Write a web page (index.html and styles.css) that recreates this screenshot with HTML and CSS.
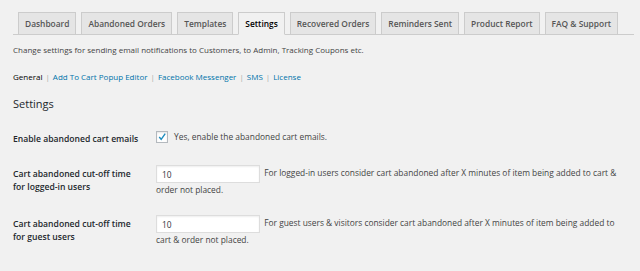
FILE: index.html
```html
<!DOCTYPE html>
<html lang="en">
<head>
    <meta charset="UTF-8">
    <meta name="viewport" content="width=device-width, initial-scale=1.0">
    <link rel="stylesheet" href="styles.css">
    <title>Abandoned Cart Settings</title>
</head>
<body>
    <div class="wrap">
        <!-- Pestañas principales -->
        <nav class="nav-tabs">
            <a class="nav-tab" href="#">Dashboard</a>
            <a class="nav-tab" href="#">Abandoned Orders</a>
            <a class="nav-tab" href="#">Templates</a>
            <a class="nav-tab active" href="#">Settings</a>
            <a class="nav-tab" href="#">Recovered Orders</a>
            <a class="nav-tab" href="#">Reminders Sent</a>
            <a class="nav-tab" href="#">Product Report</a>
            <a class="nav-tab" href="#">FAQ &amp; Support</a>
        </nav>

        <p class="intro">Change settings for sending email notifications to Customers, to Admin, Tracking Coupons etc.</p>

        <ul class="subsubsub">
            <li><a class="current" href="#">General</a><span class="sep">|</span></li>
            <li><a href="#">Add To Cart Popup Editor</a><span class="sep">|</span></li>
            <li><a href="#">Facebook Messenger</a><span class="sep">|</span></li>
            <li><a href="#">SMS</a><span class="sep">|</span></li>
            <li><a href="#">License</a></li>
        </ul>

        <h2>Settings</h2>

        <div class="form-table">
            <div class="row">
                <label class="th" for="enable-emails">Enable abandoned cart emails</label>
                <div class="td">
                    <label class="check">
                        <input type="checkbox" id="enable-emails" checked>
                        <span class="box">
                            <svg viewBox="0 0 10 10" width="10" height="10"><path d="M2.2 5 L4.2 7.3 L8.2 1.6" fill="none" stroke="#1e8cbe" stroke-width="1.4"/></svg>
                        </span>
                        Yes, enable the abandoned cart emails.
                    </label>
                </div>
            </div>

            <div class="row">
                <label class="th" for="cutoff-logged">Cart abandoned cut-off time for logged-in users</label>
                <div class="td">
                    <input class="text" type="text" id="cutoff-logged" value="10">
                    For logged-in users consider cart abandoned after X minutes of item being added to cart &amp; order not placed.
                </div>
            </div>

            <div class="row">
                <label class="th" for="cutoff-guest">Cart abandoned cut-off time for guest users</label>
                <div class="td">
                    <input class="text" type="text" id="cutoff-guest" value="10">
                    For guest users &amp; visitors consider cart abandoned after X minutes of item being added to cart &amp; order not placed.
                </div>
            </div>
        </div>
    </div>
</body>
</html>
```

FILE: styles.css
```css
body {
    font-family: 'Open Sans', 'Noto Sans', sans-serif;
    font-size: 8px;
    color: #444;
    background-color: #f1f1f1;
    margin: 0;
    padding: 0;
}

.wrap {
    padding: 12px 6px 0 13px;
}

/* Pestañas */
.nav-tabs {
    display: flex;
    gap: 5px;
    padding-left: 5px;
    border-bottom: 1px solid #ccc;
}

.nav-tab {
    display: block;
    flex-shrink: 0;
    white-space: nowrap;
    height: 21px;
    line-height: 21px;
    padding: 0 6px;
    margin-bottom: -1px;
    font-size: 8.4px;
    font-weight: 600;
    color: #555;
    text-decoration: none;
    background-color: #e5e5e5;
    border: 1px solid #ccc;
    border-bottom: none;
}

.nav-tab.active {
    color: #000;
    background-color: #f1f1f1;
    border-bottom: 1px solid #f1f1f1;
}

.intro {
    margin: 8px 0 0;
    line-height: 13px;
}

/* Sub menú */
.subsubsub {
    list-style-type: none;
    display: flex;
    margin: 14px 0 0;
    padding: 0;
    line-height: 13px;
}

.subsubsub a {
    color: #0073aa;
    text-decoration: none;
}

.subsubsub a.current {
    color: #000;
}

.subsubsub .sep {
    color: #aaa;
    margin: 0 3px;
}

h2 {
    font-size: 11px;
    font-weight: 400;
    color: #23282d;
    margin: 13px 0 0;
    line-height: 15px;
}

/* Formulario */
.form-table {
    margin-top: 13px;
}

.row {
    display: grid;
    grid-template-columns: 143px 1fr;
    padding: 6px 0 13px;
    line-height: 13px;
}

.th {
    font-size: 8.6px;
    font-weight: 600;
    color: #23282d;
    padding: 3px 16px 0 0;
}

.td {
    font-size: 8.4px;
    padding-right: 4px;
}

.check {
    display: flex;
    align-items: center;
    gap: 6px;
    margin-bottom: 2px;
}

.check input {
    display: none;
}

.check .box {
    width: 10px;
    height: 10px;
    background-color: white;
    border: 1px solid #b4b9be;
    box-shadow: inset 0 1px 2px rgba(0, 0, 0, 0.1);
    display: flex;
}

input.text {
    width: 104px;
    height: 18px;
    box-sizing: border-box;
    padding: 0 5px;
    margin: 0 2px 0 0;
    font-family: inherit;
    font-size: 8.4px;
    color: #32373c;
    background-color: white;
    border: 1px solid #ddd;
    box-shadow: inset 0 1px 2px rgba(0, 0, 0, 0.07);
    vertical-align: middle;
}
```
